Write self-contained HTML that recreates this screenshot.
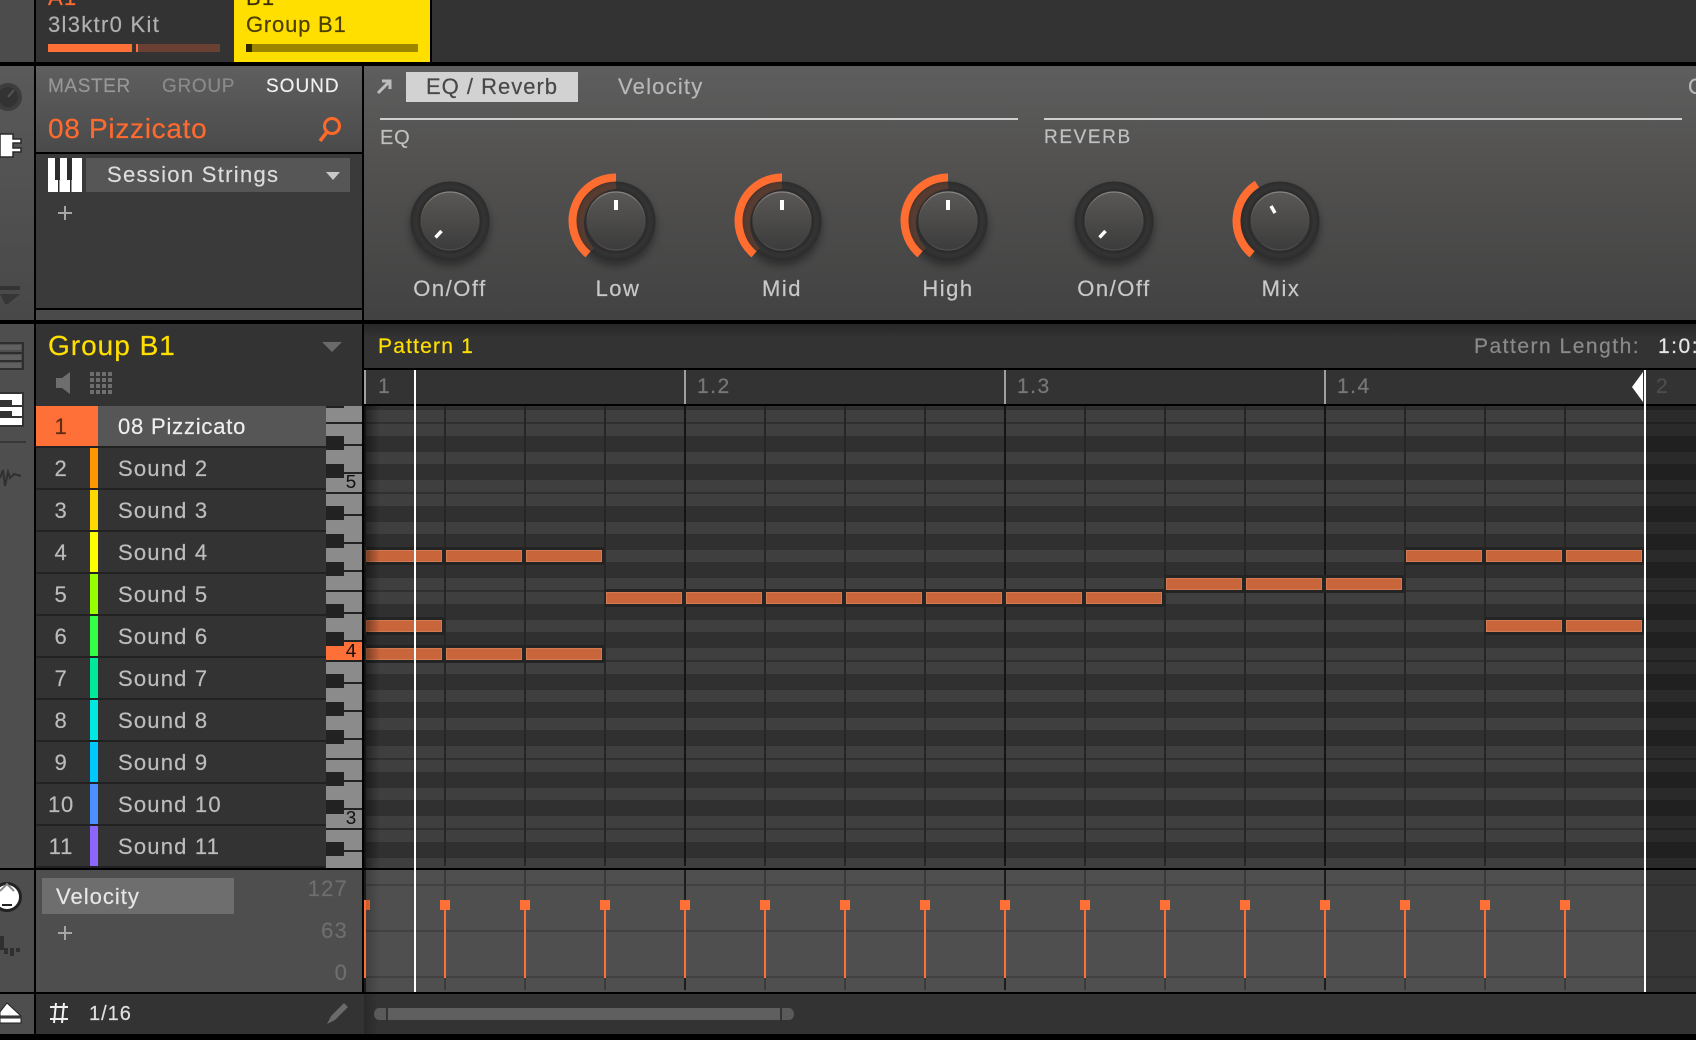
<!DOCTYPE html>
<html><head><meta charset="utf-8"><title>Maschine</title>
<style>
html,body{margin:0;padding:0;background:#000;}
#p{position:relative;width:1696px;height:1040px;overflow:hidden;background:#000;font-family:"Liberation Sans",sans-serif;}
.b{position:absolute;}
.t{position:absolute;white-space:nowrap;line-height:24px;height:24px;font-size:22px;letter-spacing:1.2px;color:#bdbdbd;margin-top:1px;-webkit-text-stroke:.2px currentColor;}
.n{width:50px;text-align:center;left:36px;letter-spacing:.8px;color:#bbb;}
svg{position:absolute;left:0;top:0;}
</style></head><body><div id="p">
<!-- left column -->
<div class="b" style="left:0;top:0;width:34px;height:62px;background:#4c4c4c"></div>
<div class="b" style="left:0;top:66px;width:34px;height:254px;background:linear-gradient(#5a5a5a,#484848)"></div>
<div class="b" style="left:0;top:324px;width:34px;height:544px;background:#4e4e4e"></div>
<div class="b" style="left:0;top:870px;width:34px;height:122px;background:#4e4e4e"></div>
<div class="b" style="left:0;top:994px;width:34px;height:40px;background:#4e4e4e"></div>
<!-- top -->
<div class="b" style="left:36px;top:0;width:198px;height:62px;background:#333"></div>
<div class="b" style="left:234px;top:0;width:196px;height:62px;background:#ffdf00"></div>
<div class="b" style="left:432px;top:0;width:1264px;height:62px;background:#333"></div>
<div class="t" style="left:48px;top:-15px;color:#ff6d33">A1</div>
<div class="t" style="left:246px;top:-15px;color:#3a3000">B1</div>
<div class="t" style="left:48px;top:12px;color:#b0b0b0;letter-spacing:1.3px">3l3ktr0 Kit</div>
<div class="t" style="left:246px;top:12px;color:#4a3f00;letter-spacing:.8px">Group B1</div>
<div class="b" style="left:48px;top:44px;width:84px;height:8px;background:#ff7038"></div>
<div class="b" style="left:136px;top:44px;width:2px;height:8px;background:#ff7038"></div>
<div class="b" style="left:138px;top:44px;width:82px;height:8px;background:#6a4033"></div>
<div class="b" style="left:246px;top:44px;width:172px;height:8px;background:#9c8600"></div>
<div class="b" style="left:246px;top:44px;width:6px;height:8px;background:#2e2800"></div>
<!-- sound header -->
<div class="b" style="left:36px;top:66px;width:326px;height:86px;background:linear-gradient(#5f5f5f,#4a4a4a)"></div>
<div class="t" style="left:48px;top:74px;font-size:19px;letter-spacing:.6px;color:#979797">MASTER</div>
<div class="t" style="left:162px;top:74px;font-size:19px;letter-spacing:.7px;color:#8a8a8a">GROUP</div>
<div class="t" style="left:266px;top:74px;font-size:19px;letter-spacing:1px;color:#f0f0f0">SOUND</div>
<div class="t" style="left:48px;top:116px;font-size:28px;letter-spacing:.7px;color:#ff6a2e">08 Pizzicato</div>
<div class="b" style="left:36px;top:154px;width:326px;height:154px;background:#3a3a3a"></div>
<div class="b" style="left:36px;top:310px;width:326px;height:10px;background:#4a4a4a"></div>
<div class="b" style="left:86px;top:158px;width:264px;height:34px;background:#565656"></div>
<div class="t" style="left:107px;top:162px;color:#dcdcdc;letter-spacing:1.3px">Session Strings</div>
<!-- right panel -->
<div class="b" style="left:364px;top:66px;width:1332px;height:254px;background:linear-gradient(#5e5e5e,#525150 40%,#424242)"></div>
<div class="b" style="left:406px;top:72px;width:172px;height:30px;background:#d2d2d2"></div>
<div class="t" style="left:426px;top:74px;color:#484848;letter-spacing:1px">EQ / Reverb</div>
<div class="t" style="left:618px;top:74px;color:#b8b8b8;letter-spacing:1.2px">Velocity</div>
<div class="t" style="left:1688px;top:74px;color:#b8b8b8">O</div>
<div class="b" style="left:380px;top:118px;width:638px;height:2px;background:#d0d0d0"></div>
<div class="b" style="left:1044px;top:118px;width:638px;height:2px;background:#d0d0d0"></div>
<div class="t" style="left:380px;top:125px;font-size:20px;letter-spacing:.8px;color:#c0c0c0">EQ</div>
<div class="t" style="left:1044px;top:125px;font-size:19px;letter-spacing:1.6px;color:#c0c0c0">REVERB</div>
<!-- group panel -->
<div class="b" style="left:36px;top:324px;width:326px;height:82px;background:#333"></div>
<div class="t" style="left:48px;top:333px;font-size:28px;letter-spacing:1px;color:#ffdf00">Group B1</div>
<!-- pattern header -->
<div class="b" style="left:364px;top:324px;width:1332px;height:44px;background:linear-gradient(#262626,#333 30%)"></div>
<div class="t" style="left:378px;top:334px;font-size:21px;letter-spacing:1.2px;color:#ffdf00">Pattern 1</div>
<div class="t" style="left:1474px;top:334px;font-size:21px;letter-spacing:1.5px;color:#8a8a8a">Pattern Length:</div>
<div class="t" style="left:1658px;top:334px;font-size:21px;letter-spacing:1.5px;color:#e6e6e6">1:0:0</div>
<div class="b" style="left:364px;top:370px;width:1332px;height:34px;background:#333"></div>
<div class="t" style="left:378px;top:374px;font-size:21px;letter-spacing:1.5px;color:#777">1</div>
<div class="t" style="left:697px;top:374px;font-size:21px;letter-spacing:1.5px;color:#777">1.2</div>
<div class="t" style="left:1017px;top:374px;font-size:21px;letter-spacing:1.5px;color:#777">1.3</div>
<div class="t" style="left:1337px;top:374px;font-size:21px;letter-spacing:1.5px;color:#777">1.4</div>
<div class="t" style="left:1656px;top:374px;font-size:21px;color:#4e4e4e">2</div>
<!-- sound rows -->
<div class="b" style="left:36px;top:406px;width:290px;height:462px;background:#222"></div>
<div class="b" style="left:36px;top:406px;width:62px;height:40px;background:#ff7038"></div><div class="b" style="left:98px;top:406px;width:228px;height:40px;background:#565656"></div>
<div class="b" style="left:36px;top:448px;width:290px;height:40px;background:#333"></div><div class="b" style="left:90px;top:448px;width:8px;height:40px;background:#ff9500"></div>
<div class="b" style="left:36px;top:490px;width:290px;height:40px;background:#333"></div><div class="b" style="left:90px;top:490px;width:8px;height:40px;background:#ffd800"></div>
<div class="b" style="left:36px;top:532px;width:290px;height:40px;background:#333"></div><div class="b" style="left:90px;top:532px;width:8px;height:40px;background:#ffff00"></div>
<div class="b" style="left:36px;top:574px;width:290px;height:40px;background:#333"></div><div class="b" style="left:90px;top:574px;width:8px;height:40px;background:#99ff00"></div>
<div class="b" style="left:36px;top:616px;width:290px;height:40px;background:#333"></div><div class="b" style="left:90px;top:616px;width:8px;height:40px;background:#33ff44"></div>
<div class="b" style="left:36px;top:658px;width:290px;height:40px;background:#333"></div><div class="b" style="left:90px;top:658px;width:8px;height:40px;background:#00e89a"></div>
<div class="b" style="left:36px;top:700px;width:290px;height:40px;background:#333"></div><div class="b" style="left:90px;top:700px;width:8px;height:40px;background:#00e8e0"></div>
<div class="b" style="left:36px;top:742px;width:290px;height:40px;background:#333"></div><div class="b" style="left:90px;top:742px;width:8px;height:40px;background:#00c8ff"></div>
<div class="b" style="left:36px;top:784px;width:290px;height:40px;background:#333"></div><div class="b" style="left:90px;top:784px;width:8px;height:40px;background:#4a90ff"></div>
<div class="b" style="left:36px;top:826px;width:290px;height:40px;background:#333"></div><div class="b" style="left:90px;top:826px;width:8px;height:40px;background:#8a66ff"></div>
<div class="t n" style="top:414px;color:#5c2c14">1</div><div class="t" style="left:118px;top:414px;color:#eee;letter-spacing:.8px">08 Pizzicato</div>
<div class="t n" style="top:456px">2</div><div class="t" style="left:118px;top:456px">Sound 2</div>
<div class="t n" style="top:498px">3</div><div class="t" style="left:118px;top:498px">Sound 3</div>
<div class="t n" style="top:540px">4</div><div class="t" style="left:118px;top:540px">Sound 4</div>
<div class="t n" style="top:582px">5</div><div class="t" style="left:118px;top:582px">Sound 5</div>
<div class="t n" style="top:624px">6</div><div class="t" style="left:118px;top:624px">Sound 6</div>
<div class="t n" style="top:666px">7</div><div class="t" style="left:118px;top:666px">Sound 7</div>
<div class="t n" style="top:708px">8</div><div class="t" style="left:118px;top:708px">Sound 8</div>
<div class="t n" style="top:750px">9</div><div class="t" style="left:118px;top:750px">Sound 9</div>
<div class="t n" style="top:792px">10</div><div class="t" style="left:118px;top:792px">Sound 10</div>
<div class="t n" style="top:834px">11</div><div class="t" style="left:118px;top:834px">Sound 11</div>
<!-- velocity panel -->
<div class="b" style="left:36px;top:870px;width:326px;height:122px;background:#4e4e4e"></div>
<div class="b" style="left:42px;top:878px;width:192px;height:36px;background:#6e6e6e"></div>
<div class="t" style="left:56px;top:884px;color:#e6e6e6;letter-spacing:1px">Velocity</div>
<div class="t" style="right:1348px;top:876px;color:#6e6e6e;letter-spacing:1.2px">127</div>
<div class="t" style="right:1348px;top:918px;color:#6e6e6e;letter-spacing:1.2px">63</div>
<div class="t" style="right:1348px;top:960px;color:#6e6e6e;letter-spacing:1.2px">0</div>
<!-- bottom -->
<div class="b" style="left:36px;top:994px;width:1660px;height:40px;background:#333"></div>
<div class="t" style="left:89px;top:1001px;color:#e0e0e0;font-size:20px;letter-spacing:1px">1/16</div>

<svg width="1696" height="1040" viewBox="0 0 1696 1040" xmlns="http://www.w3.org/2000/svg">
<defs>
<pattern id="oct" patternUnits="userSpaceOnUse" x="0" y="326" width="1696" height="168">
<rect width="1696" height="168" fill="#303030"/>
<g fill="#3f3f3f"><rect y="0" width="1696" height="12"/><rect y="28" width="1696" height="12"/><rect y="56" width="1696" height="12"/><rect y="84" width="1696" height="12"/><rect y="98" width="1696" height="12"/><rect y="126" width="1696" height="12"/><rect y="154" width="1696" height="12"/></g>
</pattern>
<linearGradient id="shade" x1="0" x2="1" y1="0" y2="0"><stop offset="0" stop-color="#000" stop-opacity=".4"/><stop offset="1" stop-color="#000" stop-opacity="0"/></linearGradient>
<radialGradient id="ring" cx=".5" cy=".5" r=".5"><stop offset=".7" stop-color="#242424"/><stop offset=".86" stop-color="#343434"/><stop offset="1" stop-color="#2c2c2c"/></radialGradient>
<linearGradient id="cap" x1="0" x2="0" y1="0" y2="1"><stop offset="0" stop-color="#5a5856"/><stop offset="1" stop-color="#3c3c3c"/></linearGradient>
<linearGradient id="capedge" x1="0" x2="0" y1="0" y2="1"><stop offset="0" stop-color="#8a8582"/><stop offset=".35" stop-color="#55524f"/><stop offset=".8" stop-color="#3e3e3e"/><stop offset="1" stop-color="#54504e"/></linearGradient>
<filter id="sh" x="-30%" y="-30%" width="160%" height="170%"><feGaussianBlur stdDeviation="4"/></filter>
<g id="knob">
<ellipse cx="0" cy="5" rx="40" ry="40" fill="#000" opacity=".35" filter="url(#sh)"/>
<circle r="39.500" fill="url(#ring)"/>
<circle r="29" fill="url(#cap)" stroke="url(#capedge)" stroke-width="1.2"/>
</g>
<g id="arc140">
<path d="M-25 30 A39 39 0 0 1 0 -36" fill="none" stroke="#ff6a2b" stroke-width="8" opacity=".18"/>
<path d="M-27.96 33.32 A43.5 43.5 0 0 1 0 -43.5" fill="none" stroke="#ff6d30" stroke-width="8"/>
</g>
<rect id="ptop" x="-2" y="-21" width="4" height="10" fill="#fff"/>
<path id="poff" d="M-14.5 16.5 L-8.5 10" stroke="#fff" stroke-width="3.5" fill="none"/>
</defs>

<!-- knobs -->
<use href="#knob" x="450" y="221"/><use href="#poff" x="450" y="221"/>
<use href="#knob" x="616" y="221"/><use href="#arc140" x="616" y="221"/><circle cx="616" cy="221" r="29" fill="url(#cap)" stroke="url(#capedge)" stroke-width="1.2"/><use href="#ptop" x="616" y="221"/>
<use href="#knob" x="782" y="221"/><use href="#arc140" x="782" y="221"/><circle cx="782" cy="221" r="29" fill="url(#cap)" stroke="url(#capedge)" stroke-width="1.2"/><use href="#ptop" x="782" y="221"/>
<use href="#knob" x="948" y="221"/><use href="#arc140" x="948" y="221"/><circle cx="948" cy="221" r="29" fill="url(#cap)" stroke="url(#capedge)" stroke-width="1.2"/><use href="#ptop" x="948" y="221"/>
<use href="#knob" x="1114" y="221"/><use href="#poff" x="1114" y="221"/>
<use href="#knob" x="1280" y="221"/>
<path d="M1252.04 254.32 A43.5 43.5 0 0 1 1256.95 184.11" fill="none" stroke="#ff6d30" stroke-width="8"/>
<path d="M1271 206 L1275 213" stroke="#fff" stroke-width="3.5"/>
<!-- knob labels -->
<g font-family="Liberation Sans, sans-serif" font-size="22" fill="#c8c8c8" stroke="#c8c8c8" stroke-width=".2" letter-spacing="1.5" text-anchor="middle">
<text x="450" y="296">On/Off</text><text x="618" y="296">Low</text><text x="782" y="296">Mid</text><text x="948" y="296">High</text><text x="1114" y="296">On/Off</text><text x="1281" y="296">Mix</text>
</g>

<!-- note grid -->
<rect x="364" y="406" width="1332" height="462" fill="url(#oct)"/>
<rect x="1646" y="406" width="50" height="462" fill="#000" opacity=".33"/>
<g fill="#262626">
<rect x="444" y="406" width="2" height="460"/><rect x="524" y="406" width="2" height="460"/><rect x="604" y="406" width="2" height="460"/>
<rect x="764" y="406" width="2" height="460"/><rect x="844" y="406" width="2" height="460"/><rect x="924" y="406" width="2" height="460"/>
<rect x="1084" y="406" width="2" height="460"/><rect x="1164" y="406" width="2" height="460"/><rect x="1244" y="406" width="2" height="460"/>
<rect x="1404" y="406" width="2" height="460"/><rect x="1484" y="406" width="2" height="460"/><rect x="1564" y="406" width="2" height="460"/>
</g>
<g fill="#141414"><rect x="364" y="406" width="2" height="462"/><rect x="684" y="406" width="2" height="460"/><rect x="1004" y="406" width="2" height="460"/><rect x="1324" y="406" width="2" height="460"/></g>

<!-- notes -->
<g id="notes" fill="#c8653a" stroke="#d47a52" stroke-width="1">
<g stroke="#242424" stroke-width="2" fill="#242424">
<rect x="366" y="548" width="238" height="16"/>
<rect x="1406" y="548" width="238" height="16"/>
<rect x="1166" y="576" width="238" height="16"/>
<rect x="606" y="590" width="558" height="16"/>
<rect x="366" y="618" width="78" height="16"/><rect x="1486" y="618" width="158" height="16"/>
<rect x="366" y="646" width="238" height="16"/>
</g>
<rect x="366.500" y="550.500" width="75" height="11"/><rect x="446.500" y="550.500" width="75" height="11"/><rect x="526.500" y="550.500" width="75" height="11"/>
<rect x="1406.500" y="550.500" width="75" height="11"/><rect x="1486.500" y="550.500" width="75" height="11"/><rect x="1566.500" y="550.500" width="75" height="11"/>
<rect x="1166.500" y="578.500" width="75" height="11"/><rect x="1246.500" y="578.500" width="75" height="11"/><rect x="1326.500" y="578.500" width="75" height="11"/>
<rect x="606.500" y="592.500" width="75" height="11"/><rect x="686.500" y="592.500" width="75" height="11"/><rect x="766.500" y="592.500" width="75" height="11"/><rect x="846.500" y="592.500" width="75" height="11"/><rect x="926.500" y="592.500" width="75" height="11"/><rect x="1006.500" y="592.500" width="75" height="11"/><rect x="1086.500" y="592.500" width="75" height="11"/>
<rect x="366.500" y="620.500" width="75" height="11"/><rect x="1486.500" y="620.500" width="75" height="11"/><rect x="1566.500" y="620.500" width="75" height="11"/>
<rect x="366.500" y="648.500" width="75" height="11"/><rect x="446.500" y="648.500" width="75" height="11"/><rect x="526.500" y="648.500" width="75" height="11"/>
</g>
<rect x="366" y="406" width="14" height="462" fill="url(#shade)"/>

<!-- piano -->
<rect x="326" y="406" width="36" height="462" fill="#8b8b8b"/>
<g fill="#222">
<rect x="326" y="406" width="18" height="2"/>
<rect x="326" y="436" width="18" height="14"/><rect x="326" y="464" width="18" height="14"/><rect x="326" y="506" width="18" height="14"/><rect x="326" y="534" width="18" height="14"/><rect x="326" y="562" width="18" height="14"/><rect x="326" y="604" width="18" height="14"/><rect x="326" y="632" width="18" height="14"/><rect x="326" y="674" width="18" height="14"/><rect x="326" y="702" width="18" height="14"/><rect x="326" y="730" width="18" height="14"/><rect x="326" y="772" width="18" height="14"/><rect x="326" y="800" width="18" height="14"/><rect x="326" y="842" width="18" height="14"/>
<rect x="344" y="444" width="18" height="2"/><rect x="344" y="472" width="18" height="2"/><rect x="344" y="514" width="18" height="2"/><rect x="344" y="542" width="18" height="2"/><rect x="344" y="570" width="18" height="2"/><rect x="344" y="612" width="18" height="2"/><rect x="344" y="640" width="18" height="2"/><rect x="344" y="682" width="18" height="2"/><rect x="344" y="710" width="18" height="2"/><rect x="344" y="738" width="18" height="2"/><rect x="344" y="780" width="18" height="2"/><rect x="344" y="808" width="18" height="2"/><rect x="344" y="850" width="18" height="2"/>
<rect x="326" y="422" width="36" height="2"/><rect x="326" y="492" width="36" height="2"/><rect x="326" y="590" width="36" height="2"/><rect x="326" y="660" width="36" height="2"/><rect x="326" y="758" width="36" height="2"/><rect x="326" y="828" width="36" height="2"/>
</g>
<path d="M344 642 H362 V660 H326 V646 H344 Z" fill="#ff7038"/>
<g font-family="Liberation Mono, monospace" font-size="19" fill="#111" text-anchor="middle">
<text x="351" y="488">5</text><text x="351" y="657">4</text><text x="351" y="824">3</text>
</g>

<!-- velocity lane -->
<rect x="364" y="870" width="1282" height="122" fill="#4f4f4f"/>
<rect x="1646" y="870" width="50" height="122" fill="#353535"/>
<g fill="#414141"><rect x="364" y="884" width="1282" height="2"/><rect x="364" y="930" width="1282" height="2"/><rect x="364" y="976" width="1282" height="2"/></g>
<g fill="#2e2e2e"><rect x="1646" y="884" width="50" height="2"/><rect x="1646" y="930" width="50" height="2"/><rect x="1646" y="976" width="50" height="2"/></g>
<g fill="#3b3b3b"><rect x="444" y="870" width="2" height="120"/><rect x="524" y="870" width="2" height="120"/><rect x="604" y="870" width="2" height="120"/><rect x="764" y="870" width="2" height="120"/><rect x="844" y="870" width="2" height="120"/><rect x="924" y="870" width="2" height="120"/><rect x="1084" y="870" width="2" height="120"/><rect x="1164" y="870" width="2" height="120"/><rect x="1244" y="870" width="2" height="120"/><rect x="1404" y="870" width="2" height="120"/><rect x="1484" y="870" width="2" height="120"/><rect x="1564" y="870" width="2" height="120"/></g>
<g fill="#1c1c1c"><rect x="364" y="870" width="2" height="122"/><rect x="684" y="870" width="2" height="120"/><rect x="1004" y="870" width="2" height="120"/><rect x="1324" y="870" width="2" height="120"/></g>
<g fill="#ff7038">
<rect x="364" y="900" width="6" height="10"/><rect x="364" y="910" width="2" height="68"/>
<rect x="440" y="900" width="10" height="10"/><rect x="444" y="910" width="2" height="68"/>
<rect x="520" y="900" width="10" height="10"/><rect x="524" y="910" width="2" height="68"/>
<rect x="600" y="900" width="10" height="10"/><rect x="604" y="910" width="2" height="68"/>
<rect x="680" y="900" width="10" height="10"/><rect x="684" y="910" width="2" height="68"/>
<rect x="760" y="900" width="10" height="10"/><rect x="764" y="910" width="2" height="68"/>
<rect x="840" y="900" width="10" height="10"/><rect x="844" y="910" width="2" height="68"/>
<rect x="920" y="900" width="10" height="10"/><rect x="924" y="910" width="2" height="68"/>
<rect x="1000" y="900" width="10" height="10"/><rect x="1004" y="910" width="2" height="68"/>
<rect x="1080" y="900" width="10" height="10"/><rect x="1084" y="910" width="2" height="68"/>
<rect x="1160" y="900" width="10" height="10"/><rect x="1164" y="910" width="2" height="68"/>
<rect x="1240" y="900" width="10" height="10"/><rect x="1244" y="910" width="2" height="68"/>
<rect x="1320" y="900" width="10" height="10"/><rect x="1324" y="910" width="2" height="68"/>
<rect x="1400" y="900" width="10" height="10"/><rect x="1404" y="910" width="2" height="68"/>
<rect x="1480" y="900" width="10" height="10"/><rect x="1484" y="910" width="2" height="68"/>
<rect x="1560" y="900" width="10" height="10"/><rect x="1564" y="910" width="2" height="68"/>
</g>
<rect x="366" y="870" width="14" height="122" fill="url(#shade)" opacity=".5"/>

<!-- ruler ticks and playheads -->
<g fill="#a0a0a0"><rect x="364" y="370" width="2" height="34"/><rect x="684" y="370" width="2" height="34"/><rect x="1004" y="370" width="2" height="34"/><rect x="1324" y="370" width="2" height="34"/></g>
<rect x="414" y="370" width="2" height="622" fill="#fff"/>
<rect x="1644" y="370" width="2" height="622" fill="#fff"/>
<path d="M1643 372 L1632 387 L1643 402 Z" fill="#fff"/>

<!-- scrollbar -->
<rect x="364" y="994" width="14" height="40" fill="url(#shade)" opacity=".5"/>
<path d="M386 1008 H379 A5 6 0 0 0 374 1014 A5 6 0 0 0 379 1020 H386 Z" fill="#5a5a5a"/>
<rect x="388" y="1008" width="392" height="12" fill="#5f5f5f"/>
<path d="M782 1008 H789 A5 6 0 0 1 794 1014 A5 6 0 0 1 789 1020 H782 Z" fill="#5a5a5a"/>

<!-- small icons -->
<path d="M378 93 L389 82 M382 81 H390 V89" fill="none" stroke="#bdbdbd" stroke-width="3"/>
<circle cx="332" cy="126" r="7.500" fill="none" stroke="#ff6a2b" stroke-width="3"/><path d="M327 132 L320 141" stroke="#ff6a2b" stroke-width="3.500"/>
<rect x="48" y="158" width="34" height="34" fill="#fff"/>
<g fill="#2c2c2c"><rect x="55" y="158" width="5" height="22"/><rect x="67" y="158" width="5" height="22"/><rect x="58" y="180" width="1.500" height="12"/><rect x="70" y="180" width="1.500" height="12"/></g>
<path d="M326 172 H340 L333 180 Z" fill="#c8c8c8"/>
<path d="M65 206 V220 M58 213 H72" stroke="#a6a6a6" stroke-width="2"/>
<path d="M65 926 V940 M58 933 H72" stroke="#a6a6a6" stroke-width="2"/>
<path d="M322 342 H342 L332 352 Z" fill="#6a6a6a"/>
<path d="M56 378 H62 L70 372 V394 L62 388 H56 Z" fill="#6e6e6e"/>
<g fill="#6e6e6e">
<rect x="90" y="372" width="4" height="4"/><rect x="96" y="372" width="4" height="4"/><rect x="102" y="372" width="4" height="4"/><rect x="108" y="372" width="4" height="4"/>
<rect x="90" y="378" width="4" height="4"/><rect x="96" y="378" width="4" height="4"/><rect x="102" y="378" width="4" height="4"/><rect x="108" y="378" width="4" height="4"/>
<rect x="90" y="384" width="4" height="4"/><rect x="96" y="384" width="4" height="4"/><rect x="102" y="384" width="4" height="4"/><rect x="108" y="384" width="4" height="4"/>
<rect x="90" y="390" width="4" height="4"/><rect x="96" y="390" width="4" height="4"/><rect x="102" y="390" width="4" height="4"/><rect x="108" y="390" width="4" height="4"/>
</g>
<path d="M50 1007 H68 M50 1019 H68 M56 1003 L54 1023 M64 1003 L62 1023" stroke="#f0f0f0" stroke-width="2" fill="none"/>
<path d="M327 1024 L331 1016 L344 1003 L348 1007 L335 1020 Z" fill="#6a6a6a"/>

<!-- left column icons -->
<circle cx="8" cy="97" r="12" fill="#333" stroke="#3d3d3d" stroke-width="4"/><path d="M8 97 L14 90" stroke="#555" stroke-width="2"/>
<path d="M0 134 H13 V139 H21 V143 H13 V148 H21 V152 H13 V157 H0 Z" fill="#fff" stroke="#2a2a2a" stroke-width="1.500"/>
<rect x="0" y="286" width="20" height="4" fill="#333"/><path d="M0 294 H20 L8 304 H5 Z" fill="#363636"/>
<g fill="none" stroke="#2e2e2e" stroke-width="2"><rect x="-2" y="343" width="25" height="10"/><rect x="-2" y="353" width="25" height="16"/><path d="M-2 361 H23"/></g>
<g fill="#616161"><rect x="0" y="345" width="21" height="5"/><rect x="0" y="355" width="21" height="5"/><rect x="0" y="363" width="21" height="5"/></g>
<rect x="-2" y="393" width="25" height="33" fill="#fff" stroke="#333" stroke-width="2"/>
<g fill="#333"><rect x="0" y="400" width="12" height="5"/><rect x="0" y="411" width="12" height="5"/><rect x="0" y="405" width="22" height="2"/><rect x="0" y="416" width="22" height="2"/></g>
<rect x="0" y="441" width="26" height="2" fill="#383838"/>
<path d="M0 478 L3 470 L5 486 L8 472 L10 478 L14 474 L21 476" fill="none" stroke="#303030" stroke-width="2"/>
<circle cx="7" cy="897" r="13.500" fill="#fff" stroke="#222" stroke-width="3"/>
<path d="M0 891 L7 884 L14 891" fill="none" stroke="#888" stroke-width="2"/><rect x="2" y="904" width="10" height="2" fill="#222"/>
<g fill="#2f2f2f"><rect x="0" y="936" width="4" height="14"/><rect x="4" y="948" width="4" height="6"/><rect x="10" y="948" width="4" height="8"/><rect x="16" y="948" width="4" height="4"/></g>
<path d="M0 1012 L7 1003 L21 1016 H0 Z" fill="#fff" stroke="#222" stroke-width="1"/><rect x="0" y="1018" width="21" height="5" fill="#fff" stroke="#222" stroke-width="1"/>
</svg>
</div></body></html>
